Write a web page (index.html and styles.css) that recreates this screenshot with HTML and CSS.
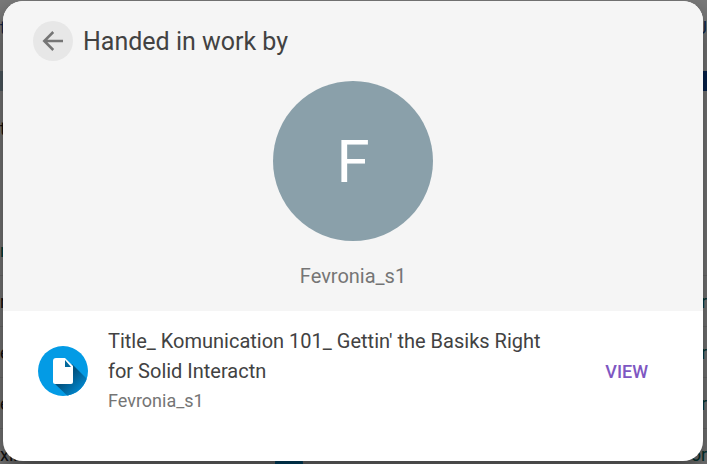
FILE: index.html
```html
<!DOCTYPE html>
<html lang="en">
  <head>
    <meta charset="UTF-8" />
    <meta name="viewport" content="width=device-width, initial-scale=1.0" />
    <title>Handed in work</title>
    <link rel="stylesheet" href="styles.css">
  </head>
  <body>
    <div class="page" aria-hidden="true">
      <div class="page-top"><span>t</span><span>U</span></div>
      <div class="page-bar"></div>
      <div class="page-tabs"><span>t</span></div>
      <div class="page-filter"><span>r</span></div>
      <div class="page-row"><span>r</span><span class="link">or</span></div>
      <div class="page-row"><span>e</span><span class="link">or</span></div>
      <div class="page-row"><span>e</span><span class="link">or</span></div>
      <div class="page-row"><span>xir</span><i class="page-dot"></i><span class="link">or</span></div>
    </div>

    <div class="overlay">
      <div class="modal" role="dialog" aria-labelledby="modal-title">
        <header class="modal-header">
          <div class="title-bar">
            <button type="button" class="back" aria-label="Back">
              <svg viewBox="0 0 24 24" width="30" height="30">
                <path d="M20 12H5M12.200 4.800L5 12l7.200 7.200" fill="none" stroke="#757575" stroke-width="2" />
              </svg>
            </button>
            <h1 id="modal-title">Handed in work by</h1>
          </div>
          <div class="avatar">F</div>
          <p class="student">Fevronia_s1</p>
        </header>

        <div class="work">
          <svg class="work-icon" viewBox="0 0 50 50" width="50" height="50">
            <defs>
              <clipPath id="disc"><circle cx="25" cy="25" r="25" /></clipPath>
              <linearGradient id="shade" gradientUnits="userSpaceOnUse" x1="24" y1="24" x2="44" y2="44">
                <stop offset="0.300" stop-color="#01527f" />
                <stop offset="1" stop-color="#0288cf" />
              </linearGradient>
            </defs>
            <circle cx="25" cy="25" r="25" fill="#039be5" />
            <path d="M34 18l22 22-18 18-22-21z" fill="url(#shade)" clip-path="url(#disc)" />
            <path d="M18 12h9l8 8v16a2 2 0 0 1-2 2H17a2 2 0 0 1-2-2V15a3 3 0 0 1 3-3z" fill="#fff" />
            <path d="M27 14v7h6z" fill="#01679a" />
          </svg>
          <div class="work-text">
            <h2>Title_ Komunication 101_ Gettin' the Basiks Right for Solid Interactn</h2>
            <p>Fevronia_s1</p>
          </div>
          <button type="button" class="view">VIEW</button>
        </div>
      </div>
    </div>
  </body>
</html>
```

FILE: styles.css
```css
* {
  margin: 0;
  padding: 0;
  box-sizing: border-box;
}

body {
  font-family: Roboto, sans-serif;
  color: #424242;
  min-height: 100vh;
  overflow: hidden;
}

button {
  border: none;
  font-family: inherit;
  cursor: pointer;
}

/* Page behind the dialog */
.page {
  height: 100vh;
  overflow: hidden;
  background: #f5f5f5;
  color: #222;
  font-size: 18px;
}

.page-top,
.page-tabs,
.page-filter,
.page-row {
  display: flex;
  align-items: center;
  justify-content: space-between;
}

.page-top {
  height: 71px;
  padding-bottom: 16px;
  color: #1a4a90;
}

.page-bar {
  height: 20px;
  background: linear-gradient(to right, #a3bbc8 50%, #0d47a1 50%);
}

.page-tabs {
  height: 75px;
}

.page-filter {
  height: 109px;
  padding-top: 60px;
  color: #00796b;
}

.page-row {
  height: 51px;
  border-top: 1px solid #ddd;
}

.page-row .link {
  color: #00695c;
}

.page-dot {
  width: 28px;
  height: 28px;
  margin-right: 132px;
  margin-bottom: -18px;
  border-radius: 50%;
  background: #039be5;
}

/* Dialog */
.overlay {
  position: absolute;
  inset: 0;
  display: flex;
  padding: 1px 4px 3px 3px;
  background: rgba(0, 0, 0, 0.5);
}

.modal {
  flex: 1;
  display: flex;
  flex-direction: column;
  overflow: hidden;
  border-radius: 20px;
  background: #fff;
  box-shadow: 0 12px 24px rgba(0, 0, 0, 0.5);
}

.modal-header {
  display: flex;
  flex-direction: column;
  align-items: center;
  padding: 20px 30px;
  background: #f5f5f5;
}

.title-bar {
  align-self: stretch;
  display: flex;
  align-items: center;
  gap: 10px;
}

.back {
  display: grid;
  place-items: center;
  width: 40px;
  height: 40px;
  border-radius: 50%;
  background: #e7e7e7;
}

.title-bar h1 {
  font-size: 25px;
  font-weight: 400;
}

.avatar {
  display: grid;
  place-items: center;
  width: 160px;
  height: 160px;
  margin: 20px 0;
  border-radius: 50%;
  background: #8aa0aa;
  color: #fff;
  font-size: 60px;
}

.student {
  color: #757575;
  font-size: 20px;
  line-height: 30px;
}

.work {
  display: flex;
  align-items: center;
  gap: 20px;
  padding: 15px 55px 15px 35px;
}

.work-icon {
  flex: none;
}

.work-text {
  flex: 1;
  padding-right: 36px;
}

.work-text h2 {
  font-size: 20px;
  font-weight: 400;
  line-height: 30px;
}

.work-text p {
  color: #757575;
  font-size: 18px;
  line-height: 30px;
}

.view {
  background: none;
  color: #7e57c2;
  font-size: 18px;
  font-weight: 500;
}
```
